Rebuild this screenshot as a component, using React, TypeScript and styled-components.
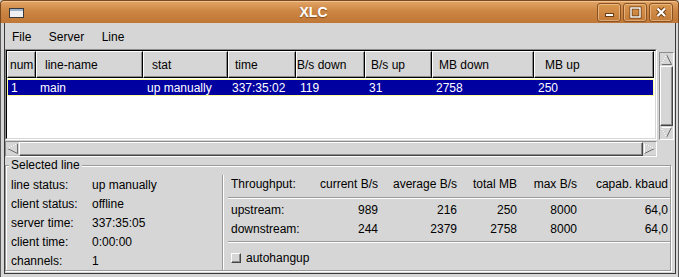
import React from "react";
import styled, { createGlobalStyle } from "styled-components";

const BG = "#d6d6d6";
const SHADOW = "#8c8c8c";

const GlobalStyle = createGlobalStyle`
  html, body {
    margin: 0;
    padding: 0;
    background: ${BG};
  }
  body {
    font-family: "Liberation Sans", Arial, sans-serif;
    font-size: 12px;
    color: #000;
  }
`;

// column layout of the line list
const columns = [
  { name: "num", width: 29, pad: 2 },
  { name: "line-name", width: 107, pad: 8 },
  { name: "stat", width: 85, pad: 8 },
  { name: "time", width: 68, pad: 6 },
  { name: "B/s down", width: 69, pad: 0 },
  { name: "B/s up", width: 67, pad: 5 },
  { name: "MB down", width: 102, pad: 6 },
  { name: "MB up", width: 120, pad: 10 },
];
const gridCols = columns.map((c) => `${c.width}px`).join(" ");

const lines = [
  ["1", "main", "up manually", "337:35:02", "119", "31", "2758", "250"],
];

const lineInfo = [
  ["line status:", "up manually"],
  ["client status:", "offline"],
  ["server time:", "337:35:05"],
  ["client time:", "0:00:00"],
  ["channels:", "1"],
];

const throughputHead = ["Throughput:", "current B/s", "average B/s", "total MB", "max B/s", "capab. kbaud"];
const throughputRows = [
  ["upstream:", "989", "216", "250", "8000", "64,0"],
  ["downstream:", "244", "2379", "2758", "8000", "64,0"],
];

const Window = styled.div`
  width: 679px;
  height: 277px;
  display: flex;
  flex-direction: column;
  overflow: hidden;
`;

const TitleBar = styled.div`
  height: 23px;
  flex-shrink: 0;
  box-sizing: border-box;
  display: flex;
  align-items: center;
  padding: 0 5px 0 8px;
  border: 1px solid #7a4a1e;
  border-bottom: none;
  border-radius: 4px 4px 0 0;
  background: linear-gradient(#e2a566, #cd8644 45%, #c07736);
  box-shadow: inset 0 1px 0 #f0c492;
`;

const WinIcon = styled.svg`
  margin-top: 2px;
  flex-shrink: 0;
`;

const Title = styled.div`
  flex: 1;
  text-align: center;
  color: #fff;
  font-weight: bold;
  font-size: 14px;
  padding-left: 6px;
  text-shadow: 0 1px 1px rgba(60, 30, 0, 0.5);
`;

const TitleButtons = styled.div`
  display: flex;
  gap: 2px;
  margin-top: 1px;
`;

const TitleButton = styled.div`
  width: 24px;
  height: 19px;
  box-sizing: border-box;
  border: 1px solid #8a5222;
  border-radius: 3px;
  background: linear-gradient(#d9974f, #c37b38);
  box-shadow: inset 0 0 0 1px rgba(255, 225, 190, 0.45);
  display: flex;
  align-items: center;
  justify-content: center;
`;

const Frame = styled.div`
  flex: 1;
  display: flex;
  background: ${BG};
  border: 1px solid #5a5a5a;
  border-top: none;
  padding: 0 2px 3px 3px;
`;

const Client = styled.div`
  flex: 1;
  display: flex;
  flex-direction: column;
  border: 1px solid #3a3a3a;
  border-top: none;
  background: ${BG};
`;

const MenuBar = styled.div`
  height: 26px;
  flex-shrink: 0;
  box-sizing: border-box;
  display: flex;
  align-items: center;
  gap: 17.5px;
  padding: 2px 0 0 7px;
`;

const MenuItem = styled.span`
  font-size: 12px;
`;

const ListArea = styled.div`
  display: grid;
  grid-template-columns: 652px 15px;
  column-gap: 2px;
  height: 91px;
  flex-shrink: 0;
`;

const ListOuter = styled.div`
  border: 1px solid;
  border-color: ${SHADOW} #fff #fff ${SHADOW};
  display: flex;
`;

const ListInner = styled.div`
  flex: 1;
  border: 1px solid;
  border-color: #000 ${BG} ${BG} #000;
  background: #fff;
  overflow: hidden;
  display: flex;
  flex-direction: column;
`;

const HeaderRow = styled.div`
  display: grid;
  grid-template-columns: ${gridCols};
  width: 647px;
  height: 27px;
  flex-shrink: 0;
`;

const HeaderCell = styled.div<{ $pad: number }>`
  box-sizing: border-box;
  border: 1px solid;
  border-color: #fff #000 #000 #fff;
  box-shadow: inset -1px -1px 0 ${SHADOW};
  background: ${BG};
  padding-left: ${(p) => p.$pad}px;
  display: flex;
  align-items: center;
  white-space: nowrap;
  overflow: hidden;
`;

const DataRow = styled.div<{ $selected?: boolean }>`
  display: grid;
  grid-template-columns: ${gridCols};
  width: 647px;
  height: 17px;
  margin-top: 1px;
  align-items: center;
  background: ${(p) => (p.$selected ? "#0000a0" : "transparent")};
  color: ${(p) => (p.$selected ? "#fff" : "#000")};
  box-shadow: ${(p) => (p.$selected ? "inset 0 0 0 1px #ffff9c" : "none")};
`;

const DataCell = styled.div`
  padding-left: 4px;
  white-space: nowrap;
  overflow: hidden;
`;

const VScroll = styled.div`
  margin-top: 3px;
  border: 1px solid;
  border-color: ${SHADOW} #fff #fff ${SHADOW};
  display: flex;
  flex-direction: column;
  background: #c4c4c4;
`;

const HScroll = styled.div`
  width: 652px;
  height: 16px;
  margin-top: 1px;
  flex-shrink: 0;
  box-sizing: border-box;
  border: 1px solid;
  border-color: ${SHADOW} #fff #fff ${SHADOW};
  display: flex;
  background: #c4c4c4;
`;

const ArrowBox = styled.div`
  width: 13px;
  height: 13px;
  flex-shrink: 0;
  display: flex;
  align-items: center;
  justify-content: center;
  background: ${BG};
`;

const Slider = styled.div`
  flex: 1;
  border: 1px solid;
  border-color: #fff #444 #444 #fff;
  box-shadow: inset -1px -1px 0 ${SHADOW};
  background: ${BG};
`;

const arrowShapes = {
  up: { fill: "6.5,1.5 1.5,11.5 11.5,11.5", lit: "1.5,11.5 6.5,1.5" },
  down: { fill: "1.5,1.5 11.5,1.5 6.5,11.5", lit: "6.5,11.5 1.5,1.5 11.5,1.5" },
  left: { fill: "1.5,6.5 11.5,1.5 11.5,11.5", lit: "1.5,6.5 11.5,1.5" },
  right: { fill: "1.5,1.5 11.5,6.5 1.5,11.5", lit: "1.5,11.5 1.5,1.5 11.5,6.5" },
};

const Arrow: React.FC<{ dir: keyof typeof arrowShapes }> = ({ dir }) => {
  const s = arrowShapes[dir];
  return (
    <ArrowBox>
      <svg width="13" height="13" viewBox="0 0 13 13">
        <polygon points={s.fill} fill={BG} stroke="#6e6e6e" strokeWidth="1" />
        <polyline points={s.lit} fill="none" stroke="#fff" strokeWidth="1" />
      </svg>
    </ArrowBox>
  );
};

const GroupBox = styled.div`
  position: relative;
  flex: 1;
  margin: 8px 4px 2px 0;
  border: 1px solid #9a9a9a;
  box-shadow: inset 1px 1px 0 #fff, 1px 1px 0 #fff;
  display: flex;
`;

const GroupLabel = styled.span`
  position: absolute;
  top: -8px;
  left: 3px;
  padding: 0 2px;
  line-height: 14px;
  background: ${BG};
`;

const InfoPanel = styled.div`
  width: 216px;
  padding: 9px 0 0 5px;
  box-sizing: border-box;
  display: grid;
  grid-template-columns: 81px 1fr;
  grid-auto-rows: 19px;
  align-items: center;
  white-space: nowrap;
`;

const VSep = styled.div`
  margin-top: 9px;
  border-left: 1px solid #9a9a9a;
  border-right: 1px solid #fff;
`;

const StatsPanel = styled.div`
  flex: 1;
  padding: 9px 0 0 4px;
`;

const StatsGrid = styled.div`
  display: grid;
  grid-template-columns: 82px 68px 79px 60px 60px 1fr;
  align-items: center;
  white-space: nowrap;
`;

const StatCell = styled.div<{ $label?: boolean; $last?: boolean }>`
  line-height: 19px;
  text-align: ${(p) => (p.$label ? "left" : "right")};
  padding-left: ${(p) => (p.$label ? 3 : 0)}px;
  padding-right: ${(p) => (p.$last ? 2 : 0)}px;
`;

const HSep = styled.div<{ $before: number; $after: number }>`
  grid-column: 1 / -1;
  height: 0;
  margin: ${(p) => p.$before}px 0 ${(p) => p.$after}px;
  border-top: 1px solid #9a9a9a;
  border-bottom: 1px solid #fff;
`;

const CheckRow = styled.label`
  grid-column: 1 / -1;
  height: 19px;
  display: flex;
  align-items: center;
  gap: 5px;
  padding-left: 3px;
`;

const CheckBox = styled.span`
  width: 10px;
  height: 10px;
  box-sizing: border-box;
  border: 1px solid;
  border-color: #fff #444 #444 #fff;
  box-shadow: inset -1px -1px 0 ${SHADOW};
  background: ${BG};
`;

const App: React.FC = () => {
  return (
    <Window>
      <GlobalStyle />
      <TitleBar>
        <WinIcon width="15" height="10" viewBox="0 0 15 10">
          <rect x="0.5" y="0.5" width="14" height="9" fill="#eef0f4" stroke="#3a3a3a" />
          <rect x="1" y="1" width="13" height="2" fill="#9fb2cc" />
        </WinIcon>
        <Title>XLC</Title>
        <TitleButtons>
          <TitleButton>
            <svg width="22" height="17" viewBox="0 0 22 17">
              <rect x="7.5" y="9.5" width="8" height="3" fill="#fff" stroke="#6a3c14" />
            </svg>
          </TitleButton>
          <TitleButton>
            <svg width="22" height="17" viewBox="0 0 22 17">
              <rect x="7" y="4" width="9" height="9" fill="none" stroke="#6a3c14" strokeWidth="3" />
              <rect x="7" y="4" width="9" height="9" fill="none" stroke="#fff" strokeWidth="1.4" />
            </svg>
          </TitleButton>
          <TitleButton>
            <svg width="22" height="17" viewBox="0 0 22 17">
              <path d="M7.5 4.5 L15 12 M15 4.5 L7.5 12" stroke="#6a3c14" strokeWidth="4" />
              <path d="M7.5 4.5 L15 12 M15 4.5 L7.5 12" stroke="#fff" strokeWidth="2.2" />
            </svg>
          </TitleButton>
        </TitleButtons>
      </TitleBar>

      <Frame>
        <Client>
          <MenuBar>
            <MenuItem>File</MenuItem>
            <MenuItem>Server</MenuItem>
            <MenuItem>Line</MenuItem>
          </MenuBar>

          <ListArea>
            <ListOuter>
              <ListInner>
                <HeaderRow>
                  {columns.map((c) => (
                    <HeaderCell key={c.name} $pad={c.pad}>
                      {c.name}
                    </HeaderCell>
                  ))}
                </HeaderRow>
                {lines.map((row) => (
                  <DataRow key={row[0]} $selected>
                    {row.map((v, i) => (
                      <DataCell key={i}>{v}</DataCell>
                    ))}
                  </DataRow>
                ))}
              </ListInner>
            </ListOuter>
            <VScroll>
              <Arrow dir="up" />
              <Slider />
              <Arrow dir="down" />
            </VScroll>
          </ListArea>

          <HScroll>
            <Arrow dir="left" />
            <Slider />
            <Arrow dir="right" />
          </HScroll>

          <GroupBox>
            <GroupLabel>Selected line</GroupLabel>
            <InfoPanel>
              {lineInfo.map(([k, v]) => (
                <React.Fragment key={k}>
                  <span>{k}</span>
                  <span>{v}</span>
                </React.Fragment>
              ))}
            </InfoPanel>
            <VSep />
            <StatsPanel>
              <StatsGrid>
                {throughputHead.map((h, i) => (
                  <StatCell key={h} $label={i === 0} $last={i === 5}>
                    {h}
                  </StatCell>
                ))}
                <HSep $before={3} $after={2} />
                {throughputRows.map((row) =>
                  row.map((v, i) => (
                    <StatCell key={row[0] + i} $label={i === 0} $last={i === 5}>
                      {v}
                    </StatCell>
                  ))
                )}
                <HSep $before={2} $after={5} />
                <CheckRow>
                  <CheckBox />
                  autohangup
                </CheckRow>
              </StatsGrid>
            </StatsPanel>
          </GroupBox>
        </Client>
      </Frame>
    </Window>
  );
};

export default App;
